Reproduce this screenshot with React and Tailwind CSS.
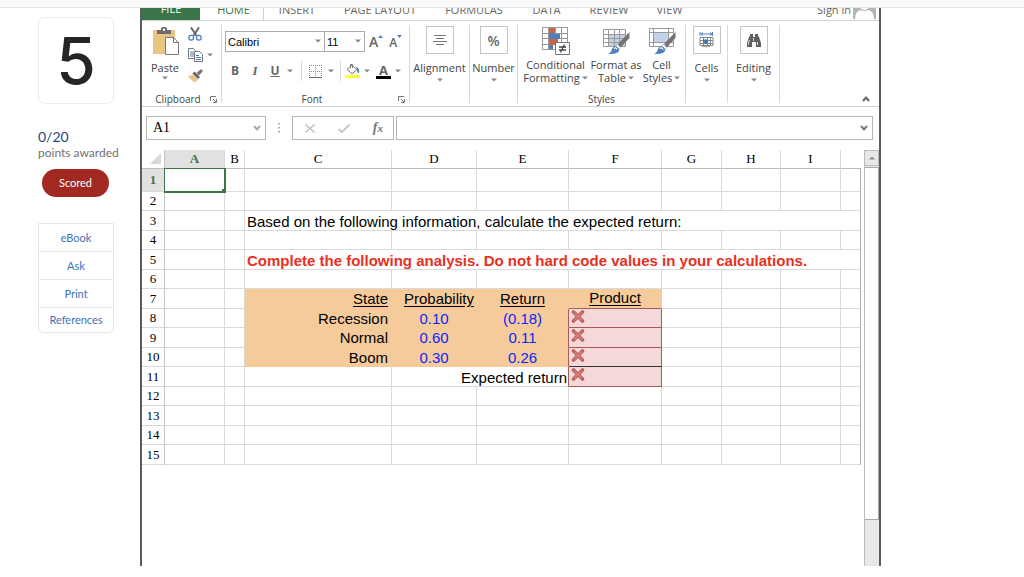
import clsx from "clsx";

const tabs = [
  { label: "INSERT", width: "w-[66px]" },
  { label: "PAGE LAYOUT", width: "w-[100px]" },
  { label: "FORMULAS", width: "w-[88px]" },
  { label: "DATA", width: "w-[57px]" },
  { label: "REVIEW", width: "w-[68px]" },
  { label: "VIEW", width: "w-[53px]" },
];

const columns = [
  { name: "A", width: "w-[60px]" },
  { name: "B", width: "w-[20px]" },
  { name: "C", width: "w-[147px]" },
  { name: "D", width: "w-[85px]" },
  { name: "E", width: "w-[92px]" },
  { name: "F", width: "w-[93px]" },
  { name: "G", width: "w-[60px]" },
  { name: "H", width: "w-[59px]" },
  { name: "I", width: "w-[60px]" },
];

const states = {
  8: { name: "Recession", probability: "0.10", value: "(0.18)" },
  9: { name: "Normal", probability: "0.60", value: "0.11" },
  10: { name: "Boom", probability: "0.30", value: "0.26" },
};

const rows = [1, 2, 3, 4, 5, 6, 7, 8, 9, 10, 11, 12, 13, 14, 15];

function Arrow({ className }) {
  return (
    <svg viewBox="0 0 6 4" className={clsx("h-1 w-1.5 shrink-0 fill-[#888]", className)}>
      <path d="M0 0.5h6L3 3.5z" />
    </svg>
  );
}

function Chevron({ className }) {
  return (
    <svg viewBox="0 0 8 6" fill="none" className={clsx("h-1.5 w-2 stroke-2", className)}>
      <path d="M1 1l3 3.4L7 1" />
    </svg>
  );
}

function Launcher({ label }) {
  return (
    <button aria-label={label} className="h-[7px] w-[7px]">
      <svg viewBox="0 0 7 7" fill="none" stroke="#777" className="h-[7px] w-[7px]">
        <path d="M0.5 5V0.5H6M3 3l3 3M6.5 3v3.5H3" />
      </svg>
    </button>
  );
}

function PasteIcon() {
  return (
    <svg viewBox="0 0 27 28" className="h-7 w-[27px]">
      <path d="M1 3h22v24H1z" fill="#e8c583" />
      <path d="M5 3h4V1.5Q9 0 11 0h2q2 0 2 1.5V3h4v4H5z" fill="#6b6b6b" />
      <circle cx="12" cy="2.8" r="1.2" fill="#fff" />
      <path d="M13.5 10.5h8l5 5v12h-13z" fill="#fff" stroke="#777" />
      <path d="M21.5 10.5v5h5" fill="none" stroke="#777" />
    </svg>
  );
}

function CutIcon() {
  return (
    <svg viewBox="0 0 14 14" fill="none" className="h-3.5 w-3.5">
      <path d="M3 0.5l5.6 8.3M11 0.5L5.4 8.8" stroke="#666" strokeWidth="2" />
      <circle cx="3.2" cy="10.8" r="2.4" stroke="#4f81bd" strokeWidth="1.3" />
      <circle cx="10.8" cy="10.8" r="2.4" stroke="#4f81bd" strokeWidth="1.3" />
    </svg>
  );
}

function CopyIcon() {
  return (
    <svg viewBox="0 0 15 14" fill="#fff" className="h-3.5 w-[15px]">
      <path d="M0.5 0.5h5l2 2v8h-7z" stroke="#777" />
      <path d="M2 4h4M2 6h4M2 8h4" stroke="#4f81bd" />
      <path d="M6.5 3.5h5l3 3v7h-8z" stroke="#777" />
      <path d="M8 7.5h3M8 9.5h5M8 11.5h5" stroke="#4f81bd" />
    </svg>
  );
}

function PainterIcon() {
  return (
    <svg viewBox="0 0 15 14" className="h-3.5 w-[15px]">
      <path d="M0 7.5l5-2 5 5-3.500 3.300z" fill="#e8c583" />
      <path d="M4.5 4.5l2-2L12 8l-2 2z" fill="#666" />
      <path d="M8.5 4l4.5-4 2 2-4 4.500z" fill="#777" />
    </svg>
  );
}

function BordersIcon() {
  return (
    <svg viewBox="0 0 13 13" fill="none" stroke="#888" className="h-[13px] w-[13px]">
      <path d="M0.5 0v12M12.5 0v12M6.5 0v12M0 0.5h13M0 6.5h13" strokeDasharray="1 1" />
      <path d="M0 12.5h13" stroke="#666" />
    </svg>
  );
}

function FillIcon() {
  return (
    <svg viewBox="0 0 15 14" className="h-3.5 w-[15px]">
      <path d="M2 5.5L7 1l5 4.5-5 4.3z" fill="#fff" stroke="#777" />
      <path d="M5.5 4V0.5h2V4" fill="none" stroke="#777" />
      <path d="M11 3q3.400 0 3.200 6-2.200-.4-2.200-3.500z" fill="#4f81bd" />
      <path d="M0 11h15v3H0z" fill="#ff3" />
    </svg>
  );
}

function AlignIcon() {
  return (
    <svg viewBox="0 0 14 12" stroke="#777" className="h-3 w-3.5">
      <path d="M1 1.5h12M3 4.5h8M0 7.5h14M3 10.5h8" />
    </svg>
  );
}

function CellsIcon() {
  return (
    <svg viewBox="0 0 15 16" fill="none" className="h-4 w-[15px]">
      <path d="M1 0v4M13.5 0v4M2 2h11M4 0.5L2 2l2 1.5M11 0.5L13 2l-2 1.5" stroke="#4f81bd" />
      <path d="M1 5.5h13v8H1zM1 8.500h13M1 11.500h13M4.500 5v9M8.500 5v9M11.500 5v9" stroke="#888" />
      <path d="M4 7.5h5v4H4z" fill="#3f76b8" />
      <path d="M3 15q2-2 4 0 2-2 4 0" stroke="#888" />
    </svg>
  );
}

function BinocularsIcon() {
  return (
    <svg viewBox="0 0 14 13" fill="#5f5f5f" className="h-[13px] w-3.5">
      <path d="M3 0h3v3h2V0h3v2l1 1 2 6v4H9V8H5v5H0V9l2-6 1-1z" />
      <path d="M1.5 11V9l1-3M10.5 11V8M6.5 4v3" stroke="#fff" strokeWidth="0.8" fill="none" />
    </svg>
  );
}

function ConditionalIcon() {
  return (
    <svg viewBox="0 0 28 28" className="h-7 w-7">
      <path d="M0.5 0.5h25v22h-25z" fill="#fff" />
      <path d="M7 0h6v6H7zM7 12h9v6H7z" fill="#c8664a" />
      <path d="M7 6h11v6H7zM7 18h4v5H7z" fill="#4f81bd" />
      <path
        d="M0.5 0.5h25v22h-25zM6.5 0v23M19.5 0v22M0 6.5h7M13 6.5h13M0 11.5h7M18 11.5h8M0 17.5h7M16 17.5h10M13.5 0v6"
        fill="none"
        stroke="#999"
      />
      <path d="M13.5 15.5h14v12h-14z" fill="#fff" stroke="#777" />
      <path d="M17 20h7M17 23h7M22.500 17.500l-4 8" stroke="#444" strokeWidth="1.3" />
    </svg>
  );
}

function Brush() {
  return (
    <>
      <path d="M27.500 5v6L19 20l-3-3z" fill="#737373" />
      <path d="M15.500 17.500l3.200 3.200-1.700 1.800-3.500-3.500z" fill="#fff" stroke="#777" strokeWidth="0.5" />
      <path d="M6 27q3-1 4-5 2-4 6-1.500 2.500 3-.5 5Q12 27.500 6 27z" fill="#4f81bd" />
      <path d="M12 21.500q2-1.500 3 1" fill="none" stroke="#fff" strokeWidth="1.3" />
    </>
  );
}

function FormatTableIcon() {
  return (
    <svg viewBox="0 0 28 28" className="h-7 w-7">
      <path d="M1 2h22v18H1z" fill="#fff" />
      <path d="M6 7h17v13H6z" fill="#c3d2e8" />
      <path
        d="M1.5 2.5h22v17h-22zM6.5 2v18M12.5 2v18M17.5 2v18M1 7.5h23M1 11.5h23M1 15.5h23"
        fill="none"
        stroke="#999"
      />
      <Brush />
    </svg>
  );
}

function CellStylesIcon() {
  return (
    <svg viewBox="0 0 28 28" className="h-7 w-7">
      <path d="M1 1h24v19H1z" fill="#fff" />
      <path d="M6 6h14v9H6z" fill="#c3d2e8" />
      <path
        d="M1.5 1.5h24v18h-24zM5.5 1v19M20.5 1v19M1 5.5h25M1 15.5h25"
        fill="none"
        stroke="#999"
      />
      <Brush />
    </svg>
  );
}

function WrongIcon() {
  return (
    <svg viewBox="0 0 14 13" fill="none" strokeLinecap="round" className="h-[13px] w-3.5">
      <path d="M2.5 2l9 9M11.500 2l-9 9" stroke="#b9625c" strokeWidth="3.6" />
      <path d="M3.5 3l7 7M10.500 3l-7 7" stroke="#dc8079" strokeWidth="1.5" />
    </svg>
  );
}

function Sidebar() {
  return (
    <aside className="w-[140px] shrink-0 pt-[9px] pl-[38px] font-[Lato,sans-serif]">
      <div className="flex h-[87px] w-[76px] items-center justify-center rounded-md border border-[#ececec] font-[Inter,sans-serif] text-[64px] leading-none font-medium text-[#262626]">
        5
      </div>
      <p className="mt-[25px] text-[14px] leading-4 text-[#1f4480]">0/20</p>
      <p className="text-[12px] leading-4 whitespace-nowrap text-[#707070]">points awarded</p>
      <button className="mt-2 ml-1 h-7 w-[67px] rounded-full bg-[#a22822] text-[11px] text-white">
        Scored
      </button>
      <nav className="mt-[26px] w-[76px] divide-y divide-[#e8e8e8] rounded-b-md border border-[#e8e8e8] text-center text-[11px] leading-[27px] text-[#3f70b5]">
        <a href="#ebook" className="block">eBook</a>
        <a href="#ask" className="block">Ask</a>
        <a href="#print" className="block">Print</a>
        <a href="#references" className="block leading-6">References</a>
      </nav>
    </aside>
  );
}

function TabStrip() {
  return (
    <div className="flex h-[13px] shrink-0 items-end overflow-hidden border-b border-[#d0d0d0] text-[11px] leading-4 text-[#666]">
      <button className="h-5 w-[58px] shrink-0 bg-[#3c7549] pb-0.5 text-white">FILE</button>
      <button className="ml-1 h-5 w-[60px] shrink-0 border-r border-[#d0d0d0] text-[#3c7549]">
        HOME
      </button>
      {tabs.map((tab) => (
        <button key={tab.label} className={clsx("h-5 shrink-0 whitespace-nowrap", tab.width)}>
          {tab.label}
        </button>
      ))}
      <button className="ml-auto h-5 whitespace-nowrap">Sign in</button>
      <svg viewBox="0 0 23 22" className="mr-[3px] ml-0.5 h-[22px] w-[23px] shrink-0">
        <path d="M0 0h23v21H0z" fill="#b5b5b5" />
        <path d="M2 21q0-8 6-9 3.5 2 7 0 6 1 6 9z" fill="#fff" />
        <circle cx="11.5" cy="7" r="5" fill="#fff" />
      </svg>
    </div>
  );
}

function Group({ title, launcher, className, children }) {
  return (
    <div className={clsx("flex h-[78px] shrink-0 flex-col border-r border-[#d8d8d8]", className)}>
      <div className="flex-1">{children}</div>
      {title && (
        <div className="flex h-2 items-center text-[10px] leading-[14px]">
          <span className={clsx("flex-1 text-center", launcher && "pl-1")}>{title}</span>
          {launcher && <Launcher label={launcher} />}
        </div>
      )}
    </div>
  );
}

function BoxButton({ label, children }) {
  return (
    <button className="flex w-full flex-col items-center pt-px">
      <span className="flex h-7 w-7 items-center justify-center border border-[#c4c4c4] text-[#666]">
        {children}
      </span>
      <span className="mt-1.5 leading-4">{label}</span>
      <Arrow className="mt-0.5" />
    </button>
  );
}

function StyleButton({ icon, first, second, className }) {
  return (
    <button className={clsx("flex flex-col items-center", className)}>
      {icon}
      <span className="mt-[3px] leading-[13px] whitespace-nowrap">{first}</span>
      <span className="flex items-center gap-0.5 leading-[13px] whitespace-nowrap">
        {second}
        <Arrow />
      </span>
    </button>
  );
}

function Picker({ label, value, className }) {
  return (
    <div className={clsx("relative", className)}>
      <select
        aria-label={label}
        defaultValue={value}
        className="block h-[21px] w-full appearance-none border border-[#aaa] pl-0.5 font-['Liberation_Sans',sans-serif] text-[11px] leading-4 text-black"
      >
        <option>{value}</option>
      </select>
      <Arrow className="pointer-events-none absolute top-2 right-1" />
    </div>
  );
}

function Ribbon() {
  return (
    <div className="flex h-[86px] shrink-0 border-b border-[#cfcfcf] pt-1 text-[11px] text-[#444]">
      <Group title="Clipboard" launcher="Clipboard options" className="w-20 pr-1">
        <div className="flex">
          <button className="ml-2 flex w-[30px] flex-col items-center pt-0.5">
            <PasteIcon />
            <span className="mt-[5px] leading-4">Paste</span>
            <Arrow />
          </button>
          <div className="ml-2 flex flex-col gap-[7px] pt-0.5">
            <button aria-label="Cut"><CutIcon /></button>
            <button aria-label="Copy" className="flex items-center gap-1">
              <CopyIcon />
              <Arrow />
            </button>
            <button aria-label="Format painter"><PainterIcon /></button>
          </div>
        </div>
      </Group>
      <Group title="Font" launcher="Font options" className="w-[188px] pr-1">
        <div className="flex pt-1.5 pl-[3px]">
          <Picker label="Font name" value="Calibri" className="w-[100px]" />
          <Picker label="Font size" value="11" className="-ml-px w-[41px]" />
          <button aria-label="Grow font" className="ml-1 flex text-[14px] leading-[22px] font-semibold text-[#666]">
            A
            <svg viewBox="0 0 5 3" className="mt-1 h-[3px] w-[5px] fill-[#4f81bd]">
              <path d="M0 3h5L2.5 0z" />
            </svg>
          </button>
          <button aria-label="Shrink font" className="ml-1.5 flex text-[12px] leading-6 font-semibold text-[#666]">
            A
            <svg viewBox="0 0 5 3" className="mt-1 h-[3px] w-[5px] fill-[#4f81bd]">
              <path d="M0 0h5L2.5 3z" />
            </svg>
          </button>
        </div>
        <div className="mt-1.5 flex h-5 items-center pl-[7px] text-[12px] text-[#666]">
          <button className="w-3 font-bold">B</button>
          <button className="ml-2 w-3 font-['Liberation_Serif',serif] text-[13px] font-bold italic">I</button>
          <button className="ml-2 w-3 font-bold underline">U</button>
          <Arrow className="ml-1.5" />
          <span className="ml-2 h-5 border-l border-[#d8d8d8]" />
          <button aria-label="Borders" className="ml-[7px]"><BordersIcon /></button>
          <Arrow className="ml-1.5" />
          <span className="ml-1.5 h-5 border-l border-[#d8d8d8]" />
          <button aria-label="Fill color" className="ml-1"><FillIcon /></button>
          <Arrow className="ml-1" />
          <button aria-label="Font color" className="ml-1.5 h-[15px] w-[15px] border-b-3 border-black text-[13px] leading-3 font-bold">
            A
          </button>
          <Arrow className="ml-1" />
        </div>
      </Group>
      <Group className="w-[60px]">
        <BoxButton label="Alignment"><AlignIcon /></BoxButton>
      </Group>
      <Group className="w-12">
        <BoxButton label="Number"><span className="text-[14px] font-semibold">%</span></BoxButton>
      </Group>
      <Group title="Styles" className="w-[168px]">
        <div className="flex pt-0.5 pl-px">
          <StyleButton icon={<ConditionalIcon />} first="Conditional" second="Formatting" className="w-[73px]" />
          <StyleButton icon={<FormatTableIcon />} first="Format as" second="Table" className="w-12" />
          <StyleButton icon={<CellStylesIcon />} first="Cell" second="Styles" className="w-[43px]" />
        </div>
      </Group>
      <Group className="w-[42px]">
        <BoxButton label="Cells"><CellsIcon /></BoxButton>
      </Group>
      <Group className="w-[52px]">
        <BoxButton label="Editing"><BinocularsIcon /></BoxButton>
      </Group>
      <button aria-label="Collapse ribbon" className="mr-[9px] mb-1 ml-auto self-end">
        <Chevron className="rotate-180 stroke-[#666]" />
      </button>
    </div>
  );
}

function FormulaBar() {
  return (
    <div className="flex h-[43px] shrink-0 items-start pt-[9px] pr-1.5 pl-1">
      <div className="flex h-6 w-[120px] shrink-0 items-center border border-[#b5b5b5] pr-1">
        <input
          aria-label="Name box"
          defaultValue="A1"
          className="w-full min-w-0 pl-1.5 font-['Liberation_Serif',serif] text-[14px] leading-5 text-black"
        />
        <Chevron className="shrink-0 stroke-[#aaa]" />
      </div>
      <svg viewBox="0 0 2 10" className="mx-3 mt-[7px] h-2.5 w-0.5 shrink-0 fill-[#aaa]">
        <path d="M0 0h2v1.5H0zM0 4h2v1.5H0zM0 8h2v1.5H0z" />
      </svg>
      <div className="flex h-6 w-[102px] shrink-0 items-center justify-between border border-[#b5b5b5] pr-2.5 pl-3">
        <button aria-label="Cancel">
          <svg viewBox="0 0 10 9" fill="none" stroke="#c8c8c8" strokeWidth="1.6" className="h-[9px] w-2.5">
            <path d="M0.5 0.5l9 8M9.5 0.5l-9 8" />
          </svg>
        </button>
        <button aria-label="Enter">
          <svg viewBox="0 0 12 9" fill="none" stroke="#c8c8c8" strokeWidth="2" className="h-[9px] w-3">
            <path d="M0.5 5L4 8l7.500-7.500" />
          </svg>
        </button>
        <button
          aria-label="Insert function"
          className="font-['Liberation_Serif',serif] text-[14px] leading-5 font-bold text-[#777] italic"
        >
          f<span className="text-[11px]">x</span>
        </button>
      </div>
      <div className="ml-0.5 flex h-6 flex-1 items-center border border-[#b5b5b5] pr-1">
        <input aria-label="Formula" className="w-full min-w-0 pl-1 text-[13px] leading-5" />
        <Chevron className="shrink-0 stroke-[#777]" />
      </div>
    </div>
  );
}

function Cell({ className, ...props }) {
  return <td className={clsx("border-r border-b p-0", className || "border-[#d9d9d9]")} {...props} />;
}

function Blanks({ count }) {
  return Array.from({ length: count }, (_, i) => (
    <Cell key={i} className={i === count - 1 ? "border-r-[#aaa] border-b-[#d9d9d9]" : "border-[#d9d9d9]"} />
  ));
}

function AnswerCell({ total }) {
  return (
    <Cell
      className={clsx(
        "border-r-[#a85a55] bg-[#f5d8da] pt-px pl-0.5 align-top",
        total ? "border-b-[#333]" : "border-b-[#a85a55]"
      )}
    >
      <WrongIcon />
    </Cell>
  );
}

function RowCells({ row }) {
  if (row === 3 || row === 5) {
    return (
      <Cell colSpan={8} className="border-r-[#aaa] border-b-[#d9d9d9] pt-px pl-0.5">
        {row === 3 ? (
          "Based on the following information, calculate the expected return:"
        ) : (
          <strong className="text-[#e8301f]">
            Complete the following analysis. Do not hard code values in your calculations.
          </strong>
        )}
      </Cell>
    );
  }
  if (row === 7) {
    return (
      <>
        <Cell className="border-[#f6cb9c] bg-[#f6cb9c] pr-[3px] text-right underline underline-offset-2">State</Cell>
        <Cell className="border-[#f6cb9c] bg-[#f6cb9c] pl-2.5 text-center underline underline-offset-2">
          Probability
        </Cell>
        <Cell className="border-[#f6cb9c] bg-[#f6cb9c] text-center underline underline-offset-2">Return</Cell>
        <Cell className="border-r-[#f6cb9c] border-b-[#a85a55] bg-[#f6cb9c] pb-0.5 text-center underline underline-offset-2">
          Product
        </Cell>
        <Blanks count={4} />
      </>
    );
  }
  if (states[row]) {
    return (
      <>
        <Cell className="border-[#f6cb9c] bg-[#f6cb9c] pr-[3px] text-right">{states[row].name}</Cell>
        <Cell className="border-[#f6cb9c] bg-[#f6cb9c] text-center text-[#0b24fb]">{states[row].probability}</Cell>
        <Cell className="border-r-[#a85a55] border-b-[#f6cb9c] bg-[#f6cb9c] text-center text-[#0b24fb]">
          {states[row].value}
        </Cell>
        <AnswerCell total={row === 10} />
        <Blanks count={4} />
      </>
    );
  }
  if (row === 11) {
    return (
      <>
        <Cell />
        <Cell colSpan={2} className="border-r-[#a85a55] border-b-[#d9d9d9] pt-0.5 pr-px text-right">
          Expected return
        </Cell>
        <AnswerCell />
        <Blanks count={4} />
      </>
    );
  }
  return <Blanks count={8} />;
}

function Sheet() {
  return (
    <div className="flex flex-1">
      <table className="w-[719px] shrink-0 table-fixed border-separate border-spacing-0 self-start font-['Liberation_Sans',sans-serif] text-[15px] leading-[17px] text-black">
        <colgroup>
          <col className="w-[23px]" />
          {columns.map((column) => (
            <col key={column.name} className={column.width} />
          ))}
          <col className="w-5" />
        </colgroup>
        <thead className="font-['Liberation_Serif',serif] text-[13px] leading-4">
          <tr className="h-[19px]">
            <td className="border-r border-b border-r-[#c4c4c4] border-b-[#bbb] p-0 align-bottom">
              <svg viewBox="0 0 11 11" className="mb-1 ml-2 h-[11px] w-[11px] fill-[#d8d8d8]">
                <path d="M11 0v11H0z" />
              </svg>
            </td>
            {columns.map((column) => (
              <th
                key={column.name}
                scope="col"
                className={clsx(
                  "border-r border-b border-r-[#d9d9d9] border-b-[#bbb] p-0",
                  column.name === "A" ? "bg-[#e1e1e1] text-[#3c7549]" : "font-normal"
                )}
              >
                {column.name}
              </th>
            ))}
            <td className="border-b border-[#bbb] p-0" />
          </tr>
        </thead>
        <tbody>
          {rows.map((row) => (
            <tr key={row} className={clsx(row === 1 ? "h-[23px]" : row % 2 ? "h-5" : "h-[19px]")}>
              <th
                scope="row"
                className={clsx(
                  "border-r border-b border-r-[#c4c4c4] border-b-[#d9d9d9] p-0 font-['Liberation_Serif',serif] text-[13px] leading-4",
                  row === 1 ? "bg-[#e1e1e1] text-[#3c7549]" : "font-normal"
                )}
              >
                {row}
              </th>
              {row === 1 ? (
                <td className="relative border-r border-b border-[#3c7549] p-0 outline outline-[#3c7549]">
                  <span className="absolute -right-0.5 -bottom-0.5 h-1 w-1 bg-[#3c7549]" />
                </td>
              ) : (
                <Cell />
              )}
              <Cell />
              <RowCells row={row} />
            </tr>
          ))}
        </tbody>
      </table>
      <div className="ml-auto flex w-[15px] flex-col border-l border-[#bbb] bg-[#e8e8e8]">
        <button aria-label="Scroll up" className="flex h-4 items-center justify-center border border-l-0 border-[#bbb]">
          <Arrow className="rotate-180" />
        </button>
        <div className="mt-px mb-[46px] flex-1 border border-l-0 border-[#aaa] bg-white" />
      </div>
    </div>
  );
}

export default function App() {
  return (
    <div className="flex h-screen flex-col bg-white pb-[11px]">
      <header className="h-2 shrink-0 border-b border-[#e6e6e6] bg-[#fafafa]" />
      <div className="flex min-h-0 flex-1">
        <Sidebar />
        <main className="flex max-w-[741px] flex-1 flex-col border-x-2 border-[#5c5c5c] font-['Open_Sans',sans-serif]">
          <TabStrip />
          <Ribbon />
          <FormulaBar />
          <Sheet />
        </main>
      </div>
    </div>
  );
}
